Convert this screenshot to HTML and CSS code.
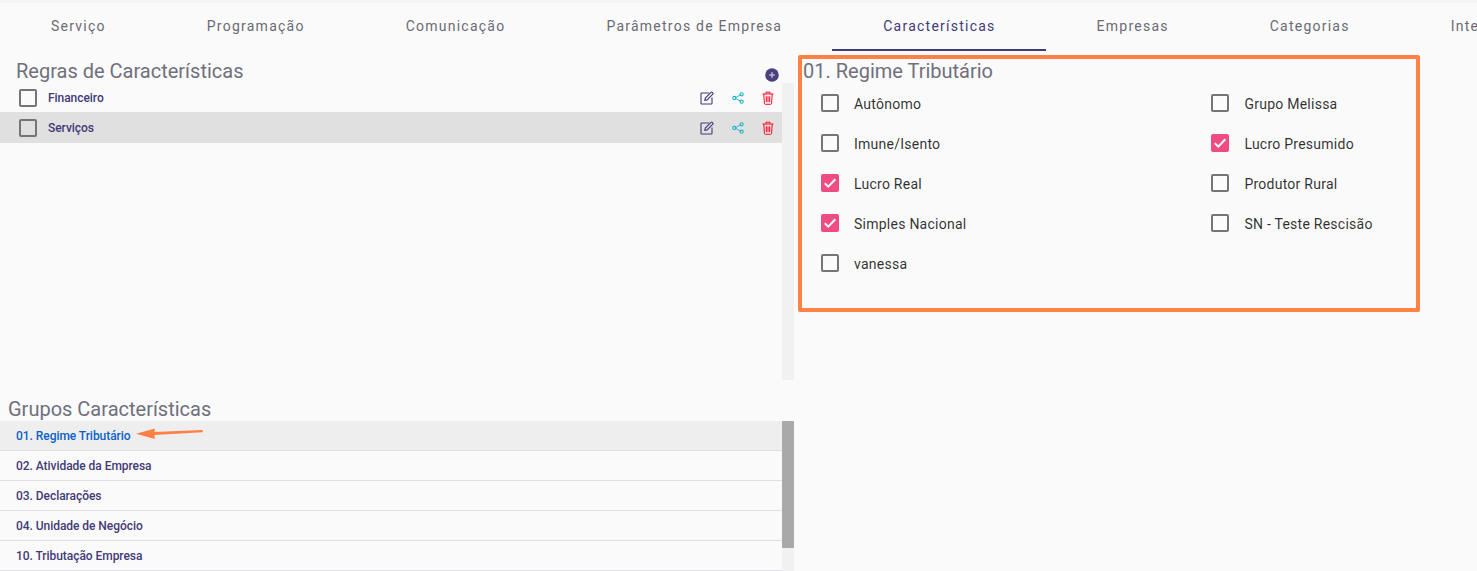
FILE: index.html
```html
<!DOCTYPE html>
<html lang="pt-BR">
<head>
<meta charset="utf-8">
<title>Características</title>
<link rel="stylesheet" href="styles.css">
</head>
<body>
<svg width="0" height="0" class="defs">
  <defs>
    <symbol id="i-edit" viewBox="0 0 14 14">
      <path d="M9.2 2H1.6a.6.6 0 0 0-.6.6v9.8a.6.6 0 0 0 .6.6h9.8a.6.6 0 0 0 .6-.6V6.6" fill="none" stroke="currentColor" stroke-width="1.1"/>
      <path d="M4.8 9.4l.5-2.3L11 1.4a.9.9 0 0 1 1.2 0l.6.6a.9.9 0 0 1 0 1.2L7.100 8.900z" fill="none" stroke="currentColor" stroke-width="1.1"/>
    </symbol>
    <symbol id="i-share" viewBox="0 0 12 12">
      <path d="M3 6l6-3.500M3 6l6 3.500" fill="none" stroke="currentColor" stroke-width=".9"/>
      <circle cx="2.300" cy="6" r="1.600" fill="none" stroke="currentColor" stroke-width="1.100"/>
      <circle cx="9.600" cy="2.300" r="1.600" fill="none" stroke="currentColor" stroke-width="1.100"/>
      <circle cx="9.600" cy="9.700" r="1.600" fill="none" stroke="currentColor" stroke-width="1.100"/>
    </symbol>
    <symbol id="i-trash" viewBox="0 0 12 14">
      <path d="M.5 3h11M4 3V1.200h4V3M1.800 3l.6 9.400a1 1 0 0 0 1 .9h5.200a1 1 0 0 0 1-.9L10.200 3M4.300 5.300v5.800M6 5.300v5.800M7.700 5.300v5.800" fill="none" stroke="currentColor" stroke-width="1"/>
    </symbol>
    <symbol id="i-check" viewBox="0 0 18 18">
      <path d="M3.800 9.300l3.500 3.400 7-7.400" fill="none" stroke="#fff" stroke-width="2"/>
    </symbol>
  </defs>
</svg>

<div class="page">
  <nav class="tabs">
    <a class="tab">Serviço</a>
    <a class="tab">Programação</a>
    <a class="tab">Comunicação</a>
    <a class="tab">Parâmetros de Empresa</a>
    <a class="tab tab-active">Características</a>
    <a class="tab">Empresas</a>
    <a class="tab">Categorias</a>
    <a class="tab">Integrações</a>
  </nav>

  <main class="content">
    <div class="left">
      <section class="rules">
        <header class="rules-head">
          <h2 class="title">Regras de Características</h2>
          <span class="add"><svg viewBox="0 0 14 14" width="14" height="14"><circle cx="7" cy="7" r="6.800" fill="#4a4280"/><path d="M7 4.200v5.600M4.200 7h5.600" stroke="#b9b6d0" stroke-width="1.600"/></svg></span>
        </header>
        <div class="rules-body">
          <ul class="rule-list">
            <li class="rule">
              <span class="box"></span>
              <span class="rule-name">Financeiro</span>
              <span class="actions">
                <svg class="ic ic-edit"><use href="#i-edit"/></svg>
                <svg class="ic ic-share"><use href="#i-share"/></svg>
                <svg class="ic ic-trash"><use href="#i-trash"/></svg>
              </span>
            </li>
            <li class="rule rule-on">
              <span class="box"></span>
              <span class="rule-name">Serviços</span>
              <span class="actions">
                <svg class="ic ic-edit"><use href="#i-edit"/></svg>
                <svg class="ic ic-share"><use href="#i-share"/></svg>
                <svg class="ic ic-trash"><use href="#i-trash"/></svg>
              </span>
            </li>
          </ul>
          <div class="track"></div>
        </div>
      </section>

      <section class="groups">
        <h2 class="title groups-title">Grupos Características</h2>
        <div class="groups-body">
          <ul class="group-list">
            <li class="group group-on">01. Regime Tributário</li>
            <li class="group">02. Atividade da Empresa</li>
            <li class="group">03. Declarações</li>
            <li class="group">04. Unidade de Negócio</li>
            <li class="group">10. Tributação Empresa</li>
          </ul>
          <div class="track track-groups"><div class="thumb"></div></div>
        </div>
      </section>
    </div>

    <section class="right">
      <h2 class="title right-title">01. Regime Tributário</h2>
      <div class="options">
        <label class="opt"><span class="box"></span>Autônomo</label>
        <label class="opt"><span class="box"></span>Grupo Melissa</label>
        <label class="opt"><span class="box"></span>Imune/Isento</label>
        <label class="opt"><span class="box box-on"><svg class="tick"><use href="#i-check"/></svg></span>Lucro Presumido</label>
        <label class="opt"><span class="box box-on"><svg class="tick"><use href="#i-check"/></svg></span>Lucro Real</label>
        <label class="opt"><span class="box"></span>Produtor Rural</label>
        <label class="opt"><span class="box box-on"><svg class="tick"><use href="#i-check"/></svg></span>Simples Nacional</label>
        <label class="opt"><span class="box"></span>SN - Teste Rescisão</label>
        <label class="opt"><span class="box"></span>vanessa</label>
      </div>
    </section>
  </main>

  <div class="mark-rect"></div>
  <svg class="mark-arrow" viewBox="0 0 70 14" width="70" height="14">
    <path d="M1 7.800L20 2.500l-.6 3.500L67 3.900q2 .7 .3 2.300L19.400 9l.6 4z" fill="#ff7f45"/>
  </svg>
</div>
</body>
</html>
```
FILE: styles.css
```css
* { box-sizing: border-box; }
html, body { margin: 0; padding: 0; }
body {
  background: #fafafa;
  font-family: Roboto, "Liberation Sans", sans-serif;
  overflow: hidden;
}
.defs { position: absolute; }
.page {
  position: relative;
  width: 1477px;
  height: 571px;
  overflow: hidden;
  border-top: 3px solid #f5f5f5;
}
.tabs {
  display: flex;
  height: 48px;
  overflow: hidden;
}
.tab {
  flex: none;
  height: 48px;
  line-height: 46px;
  padding: 0 50px 0 51px;
  font-size: 14px;
  letter-spacing: 1.240px;
  color: #6b6b76;
  border-bottom: 2px solid transparent;
}
.tab-active { color: #433a78; border-bottom-color: #433a78; }

.content { display: flex; }
.left { flex: none; width: 794px; }
.title {
  margin: 0;
  font-size: 20px;
  font-weight: 400;
  line-height: 24px;
  color: #70707c;
}
.rules-head {
  display: flex;
  justify-content: space-between;
  align-items: flex-end;
  height: 32px;
  padding: 8px 15px 0 16px;
}
.add { display: block; height: 15px; }
.add svg { display: block; }
.rules-body { display: flex; height: 297px; }
.rule-list, .group-list { flex: 1; margin: 0; padding: 0; list-style: none; }
.rule {
  display: flex;
  align-items: center;
  height: 31px;
  padding: 1px 0 0 19px;
}
.rule:first-child { height: 29px; }
.rule-on { background: #e0e0e0; }
.rule-name {
  margin-left: 11px;
  font-size: 12px;
  font-weight: 500;
  letter-spacing: -.05px;
  color: #433a78;
}
.actions { display: flex; align-items: center; margin-left: auto; height: 14px; }
.ic { display: block; height: 14px; }
.ic-edit { width: 14px; margin-right: 18px; color: #433a78; }
.ic-share { width: 12px; margin-right: 18px; color: #1fb3c6; }
.ic-trash { width: 12px; margin-right: 8px; color: #ff0a2a; }
.track { flex: none; width: 12px; background: #f1f1f1; }
.track-groups { height: 150px; }
.thumb { height: 127px; background: #a9a9a9; border-radius: 1px; }

.groups-title { padding: 17px 0 0 8px; height: 41px; }
.groups-body { display: flex; }
.group {
  height: 30px;
  padding: 1px 0 0 16px;
  line-height: 29px;
  font-size: 12px;
  font-weight: 500;
  letter-spacing: -.05px;
  color: #433a78;
  border-bottom: 1px solid #e0e0e6;
}
.group-on { background: #eeeeee; color: #0a62c8; }

.right { flex: 1; padding: 8px 0 0 9px; }
.right-title { margin-bottom: 1px; }
.options {
  display: grid;
  grid-template-columns: 390.400px 390px;
  grid-auto-rows: 40px;
  padding-left: 18px;
}
.opt {
  display: flex;
  align-items: center;
  font-size: 14px;
  letter-spacing: .25px;
  color: rgba(0, 0, 0, .82);
}
.box {
  flex: none;
  display: block;
  width: 18px;
  height: 18px;
  margin-top: -1px;
  border: 2px solid #757575;
  border-radius: 2px;
  position: relative;
}
.opt .box { margin-right: 15px; margin-top: -2px; }
.box-on { background: #ee4c83; border-color: #ee4c83; }
.tick { position: absolute; left: -2px; top: -2px; width: 18px; height: 18px; }

.mark-rect {
  position: absolute;
  left: 798px;
  top: 52px;
  width: 622px;
  height: 257px;
  border: 4px solid #ff8145;
  border-radius: 2px;
}
.mark-arrow { position: absolute; left: 135px; top: 423px; }
```
